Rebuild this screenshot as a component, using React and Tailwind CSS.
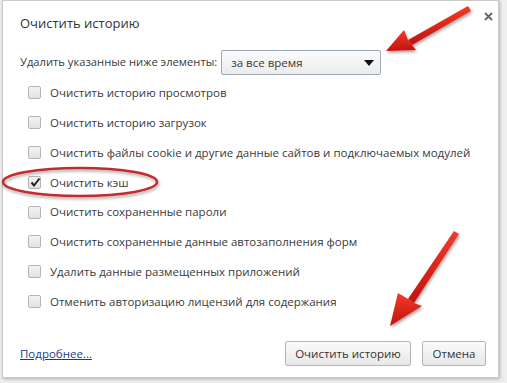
import React from "react";

const items = [
  { label: "Очистить историю просмотров", checked: false },
  { label: "Очистить историю загрузок", checked: false },
  { label: "Очистить файлы cookie и другие данные сайтов и подключаемых модулей", checked: false },
  { label: "Очистить кэш", checked: true },
  { label: "Очистить сохраненные пароли", checked: false },
  { label: "Очистить сохраненные данные автозаполнения форм", checked: false },
  { label: "Удалить данные размещенных приложений", checked: false },
  { label: "Отменить авторизацию лицензий для содержания", checked: false },
];

function Checkbox({ checked }) {
  return (
    <span className="relative flex h-[13px] w-[13px] shrink-0 items-center justify-center rounded-[2px] border border-[#b5b5b5] bg-gradient-to-b from-[#f4f4f4] to-[#e2e2e2]">
      {checked && (
        <svg width="11" height="11" viewBox="0 0 11 11" className="absolute left-[1px] top-[0px]">
          <path d="M1.5 5.5 L4 8.5 L9.5 1.5" fill="none" stroke="#222" strokeWidth="2" />
        </svg>
      )}
    </span>
  );
}

export default function App() {
  return (
    <div className="relative h-[383px] w-[507px] overflow-hidden bg-[#eeeeee] text-[#3a3a3a]" style={{ fontFamily: '"Open Sans", "Noto Sans", sans-serif' }}>
      <div className="relative ml-[2px] flex h-[378px] w-[497px] flex-col border border-[#c9c9c9] bg-white shadow-[1px_1px_3px_rgba(0,0,0,0.25)]">
        <div className="pl-[17px] pt-[12px] text-[13px] leading-[20px] text-[#333]">Очистить историю</div>
        <button className="absolute right-[3px] top-[8px] flex h-[14px] w-[14px] items-center justify-center">
          <svg width="9" height="9" viewBox="0 0 9 9">
            <path d="M1 1 L8 8 M8 1 L1 8" stroke="#666" strokeWidth="1.8" />
          </svg>
        </button>
        <div className="mt-[17px] flex items-center pl-[17px]">
          <span className="text-[11.2px]">Удалить указанные ниже элементы:</span>
          <div className="ml-[4px] flex h-[25px] w-[160px] items-center justify-between rounded-[2px] border border-[#9da9b8] bg-gradient-to-b from-[#fbfbfb] to-[#ececec] pl-[9px] pr-[6px] text-[11.5px]">
            <span>за все время</span>
            <svg width="10" height="6" viewBox="0 0 10 6"><path d="M0 0 L10 0 L5 6 Z" fill="#111" /></svg>
          </div>
        </div>
        <div className="mt-[3px] flex flex-col pl-[25px] text-[11.5px]">
          {items.map((it) => (
            <div key={it.label} className="flex h-[29.8px] items-center gap-[9px]">
              <Checkbox checked={it.checked} />
              <span className="whitespace-nowrap">{it.label}</span>
            </div>
          ))}
        </div>
        <div className="mt-auto mb-[11px] flex items-center justify-between pl-[17px] pr-[12px]">
          <a className="text-[11.5px] text-[#1a3d8a] underline">Подробнее...</a>
          <div className="flex gap-[11px]">
            <button className="h-[25px] w-[126px] rounded-[2px] border border-[#b5b5b5] bg-gradient-to-b from-[#fafafa] to-[#e8e8e8] text-[11.5px] text-[#333]">Очистить историю</button>
            <button className="h-[25px] w-[64px] rounded-[2px] border border-[#b5b5b5] bg-gradient-to-b from-[#fafafa] to-[#e8e8e8] text-[11.5px] text-[#333]">Отмена</button>
          </div>
        </div>
      </div>
      <svg className="pointer-events-none absolute left-0 top-0" width="507" height="383" viewBox="0 0 507 383">
        <defs>
          <filter id="sh" x="-20%" y="-20%" width="140%" height="140%">
            <feDropShadow dx="1" dy="2" stdDeviation="1.5" floodColor="#000" floodOpacity="0.35" />
          </filter>
          <linearGradient id="rg" x1="0" y1="0" x2="0" y2="1">
            <stop offset="0" stopColor="#f23a2a" />
            <stop offset="1" stopColor="#c3120e" />
          </linearGradient>
        </defs>
        <ellipse cx="80" cy="182" rx="77" ry="14" fill="none" stroke="#c42a2e" strokeWidth="2.5" filter="url(#sh)" />
        <g filter="url(#sh)">
          <path d="M468 6 L471 11 L412 45 L408 40 Z" fill="url(#rg)" />
          <path d="M386 51 L404 30 L408 40 L412 45 L416 50 Z" fill="url(#rg)" />
        </g>
        <g filter="url(#sh)">
          <path d="M454 231 L459 234 L414 303 L408 299 Z" fill="url(#rg)" />
          <path d="M390 326 L398 293 L408 299 L414 303 L422 306 Z" fill="url(#rg)" />
        </g>
      </svg>
    </div>
  );
}
